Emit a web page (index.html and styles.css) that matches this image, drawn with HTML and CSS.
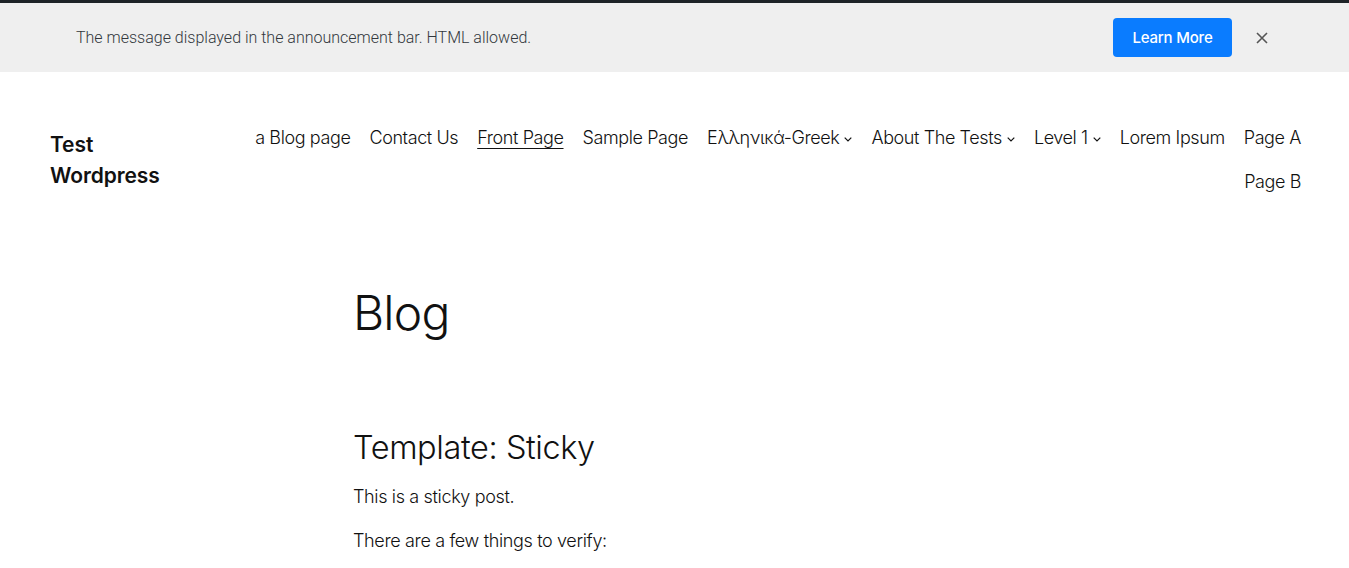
FILE: index.html
```html
<!DOCTYPE html>
<html lang="en">
<head>
<meta charset="utf-8">
<title>Blog – Test Wordpress</title>
<link rel="stylesheet" href="styles.css">
</head>
<body>
<div class="announce">
  <p class="announce-text">The message displayed in the announcement bar. HTML allowed.</p>
  <div class="announce-actions">
    <a class="btn" href="#">Learn More</a>
    <button class="close" aria-label="Close">
      <svg width="12" height="12" viewBox="0 0 12 12"><path d="M1 1L11 11M11 1L1 11" stroke="#555" stroke-width="1.6" fill="none"/></svg>
    </button>
  </div>
</div>
<header class="site-header">
  <div class="site-title">Test<br>Wordpress</div>
  <nav class="nav">
    <a href="#">a Blog page</a>
    <a href="#">Contact Us</a>
    <a href="#" class="current">Front Page</a>
    <a href="#">Sample Page</a>
    <a href="#" class="sub">Ελληνικά-Greek<svg class="chev" width="8" height="5" viewBox="0 0 8 5"><path d="M0.7 0.7L4 4L7.3 0.7" stroke="#111" stroke-width="1.2" fill="none"/></svg></a>
    <a href="#" class="sub">About The Tests<svg class="chev" width="8" height="5" viewBox="0 0 8 5"><path d="M0.7 0.7L4 4L7.3 0.7" stroke="#111" stroke-width="1.2" fill="none"/></svg></a>
    <a href="#" class="sub">Level 1<svg class="chev" width="8" height="5" viewBox="0 0 8 5"><path d="M0.7 0.7L4 4L7.3 0.7" stroke="#111" stroke-width="1.2" fill="none"/></svg></a>
    <a href="#">Lorem Ipsum</a>
    <a href="#">Page A</a>
    <a href="#">Page B</a>
  </nav>
</header>
<main class="content">
  <h1 class="page-title">Blog</h1>
  <article class="post">
    <h2 class="post-title">Template: Sticky</h2>
    <p>This is a sticky post.</p>
    <p>There are a few things to verify:</p>
  </article>
</main>
</body>
</html>
```
FILE: styles.css
```css
* { box-sizing: border-box; }
html, body { margin: 0; padding: 0; }
body {
  font-family: Inter, "Noto Sans", sans-serif;
  color: #111;
  background: #fff;
  border-top: 3px solid #1d2327;
}
.announce {
  background: #efefef;
  height: 69px;
  display: flex;
  align-items: center;
  justify-content: space-between;
  padding: 0 81px 0 76px;
}
.announce-text {
  margin: 0;
  font-family: Roboto, sans-serif;
  font-size: 16px;
  font-weight: 300;
  color: #32373c;
}
.announce-actions {
  display: flex;
  align-items: center;
  gap: 24px;
}
.btn {
  display: inline-flex;
  align-items: center;
  justify-content: center;
  width: 119px;
  height: 39px;
  background: #0a7cff;
  color: #fff;
  border-radius: 4px;
  text-decoration: none;
  font-family: Inter, sans-serif;
  font-weight: 500;
  font-size: 15px;
  letter-spacing: -0.2px;
}
.close {
  background: none;
  border: 0;
  padding: 0;
  width: 12px;
  height: 12px;
  display: flex;
  cursor: pointer;
}
.site-header {
  display: flex;
  align-items: center;
  justify-content: space-between;
  padding: 44px 48px 42px 50px;
}
.site-title {
  font-size: 21px;
  font-weight: 600;
  line-height: 31px;
  letter-spacing: -0.1px;
  flex: 0 0 auto;
}
.nav {
  display: flex;
  flex-wrap: wrap;
  justify-content: flex-end;
  column-gap: 19px;
  max-width: 1060px;
}
.nav a {
  color: #111;
  text-decoration: none;
  font-size: 18px;
  font-weight: 300;
  line-height: 44px;
  letter-spacing: -0.4px;
  display: inline-flex;
  align-items: center;
}
.nav a.current { text-decoration: underline; text-underline-offset: 4px; text-decoration-thickness: 1px; }
.chev { margin-left: 5px; margin-top: 2px; }
.content {
  width: 643px;
  margin: 0 auto;
  padding-top: 38px;
}
.page-title {
  margin: 0;
  font-size: 48px;
  font-weight: 300;
  line-height: 1.2;
  letter-spacing: -0.8px;
}
.post { margin-top: 86px; }
.post-title {
  margin: 0;
  font-size: 32.5px;
  font-weight: 300;
  line-height: 1.2;
  letter-spacing: -0.4px;
}
.post p {
  margin: 13px 0 0;
  font-size: 18px;
  font-weight: 300;
  line-height: 34px;
  letter-spacing: -0.35px;
}
.post p + p { margin-top: 10px; }
```
